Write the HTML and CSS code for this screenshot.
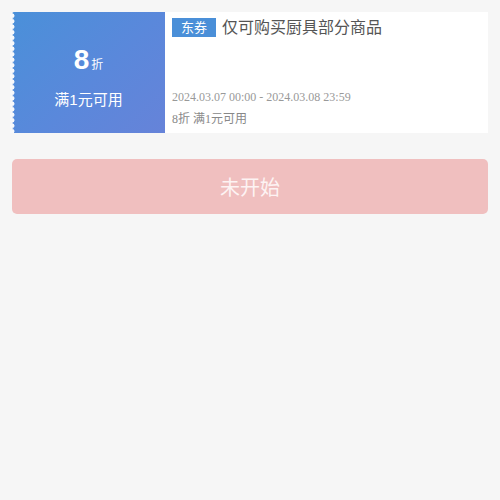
FILE: index.html
```html
<!DOCTYPE html>
<html lang="zh">
<head>
<meta charset="utf-8">
<link rel="stylesheet" href="styles.css">
</head>
<body>
<div class="page">
  <div class="coupon">
    <div class="left">
      <div class="amount"><span class="num">8</span><span class="unit">折</span></div>
      <div class="cond">满1元可用</div>
    </div>
    <div class="right">
      <div class="title"><span class="tag">东券</span><span class="name">仅可购买厨具部分商品</span></div>
      <div class="info">
        <div class="date">2024.03.07 00:00 - 2024.03.08 23:59</div>
        <div class="desc">8折 满1元可用</div>
      </div>
    </div>
  </div>
  <div class="btn">未开始</div>
</div>
</body>
</html>
```
FILE: styles.css
```css
html, body {
  margin: 0;
  padding: 0;
  background: #f6f6f6;
}
body {
  font-family: "Liberation Sans", "Noto Sans CJK SC", sans-serif;
}
.page {
  padding: 12px;
  display: flex;
  flex-direction: column;
  gap: 26px;
}
.coupon {
  display: flex;
  height: 121px;
  background: #fff;
}
.left {
  position: relative;
  width: 153px;
  box-sizing: border-box;
  padding-top: 10px;
  background: linear-gradient(135deg, #4a90d9 0%, #5a88db 55%, #6683d9 100%);
  color: #fff;
  display: flex;
  flex-direction: column;
  align-items: center;
  justify-content: center;
}
.left::before {
  content: "";
  position: absolute;
  left: -2px;
  top: 0;
  bottom: 0;
  width: 5px;
  background: radial-gradient(circle at 2px 50%, #f8f9fb 2.2px, transparent 2.8px) 0 1px / 5px 5.5px repeat-y;
}
.amount {
  display: flex;
  align-items: baseline;
}
.num {
  font-size: 28px;
  font-weight: bold;
  line-height: 28px;
}
.unit {
  font-size: 12px;
  margin-left: 2px;
}
.cond {
  font-size: 15px;
  line-height: 18px;
  margin-top: 17px;
}
.right {
  flex: 1;
  padding: 6px 7px 6px 7px;
  display: flex;
  flex-direction: column;
  justify-content: space-between;
}
.title {
  display: flex;
  align-items: center;
  gap: 6px;
}
.tag {
  background: #4a8fd8;
  color: #fff;
  font-size: 13px;
  line-height: 19px;
  padding: 0 9px;
}
.name {
  font-size: 16px;
  color: #555;
  line-height: 19px;
}
.info {
  font-family: "Liberation Serif", "Noto Sans CJK SC", serif;
  color: #999;
  font-size: 12px;
}
.date {
  line-height: 16px;
  margin-bottom: 6px;
}
.desc {
  color: #888;
  line-height: 16px;
}
.btn {
  height: 55px;
  background: #f0bfbf;
  border-radius: 5px;
  color: #fdf3f3;
  font-size: 20px;
  display: flex;
  align-items: center;
  justify-content: center;
}
```
